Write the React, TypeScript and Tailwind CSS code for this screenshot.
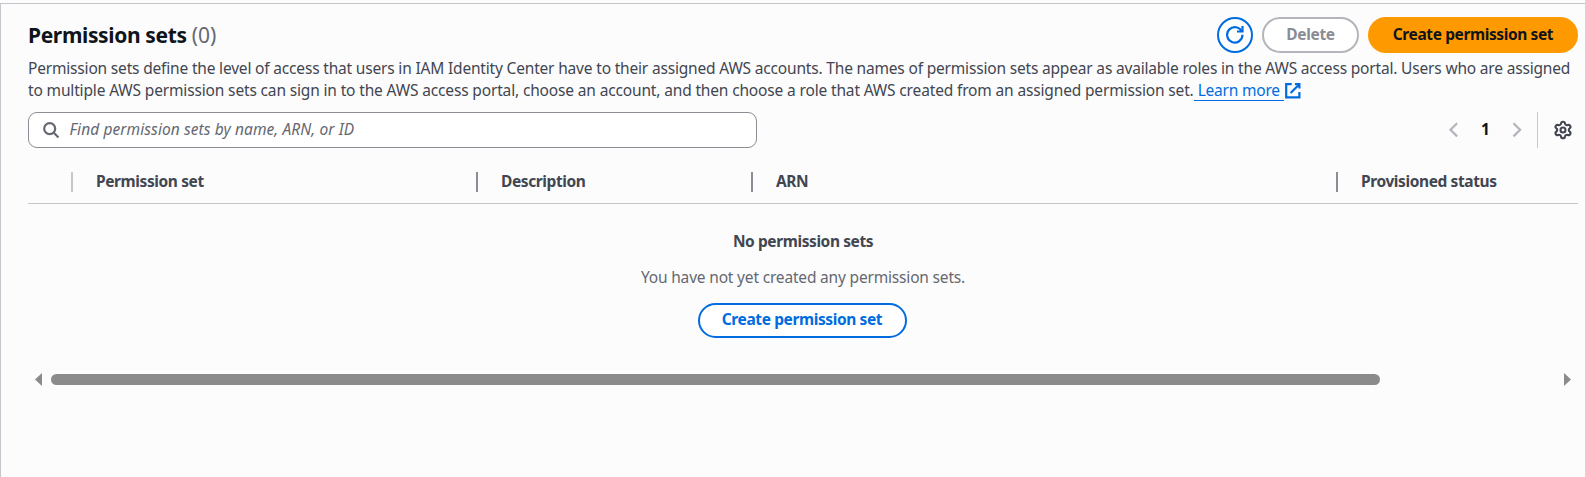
import type { ReactNode } from "react";
import { Settings } from "lucide-react";

function Icon({ children, className = "" }: { children: ReactNode; className?: string }) {
  return (
    <svg viewBox="0 0 16 16" fill="none" stroke="currentColor" strokeWidth="2" className={`size-[17.6px] shrink-0 ${className}`}>
      {children}
    </svg>
  );
}

const columns = [
  { label: "Permission set", width: "w-[405px]", bar: "bg-[#c6c6cd]" },
  { label: "Description", width: "w-[275px]", bar: "bg-[#8c8c94]" },
  { label: "ARN", width: "w-[585px]", bar: "bg-[#8c8c94]" },
  { label: "Provisioned status", width: "flex-1", bar: "bg-[#8c8c94]" },
];

function Header() {
  return (
    <header>
      <div className="flex h-9 items-center justify-between">
        <h2 className="flex gap-[5px] text-[21px] leading-7">
          <span className="font-bold tracking-[-0.36px] text-[#0f141a]">Permission sets</span>
          <span className="text-[#656871]">(0)</span>
        </h2>
        <div className="flex gap-[9px]">
          <button aria-label="Refresh" className="flex size-9 items-center justify-center rounded-full border-2 border-[#006ce0] bg-white text-[#006ce0]">
            <Icon>
              <path d="M10 5h5V0" />
              <path d="M15 8a7 7 0 1 1-.53-2.64" />
            </Icon>
          </button>
          <button className="h-9 w-[97px] rounded-full border-2 border-[#b4b4bb] bg-white pb-[2px] font-bold tracking-[-0.3px] text-[#8c8c94]">Delete</button>
          <button className="h-9 w-[210px] rounded-full bg-[#ff9900] pb-[2px] font-bold tracking-[-0.39px] text-[#0f141a]">Create permission set</button>
        </div>
      </div>
      <div className="mt-1 whitespace-nowrap text-[#424650]">
        <p className="tracking-[-0.18px]">
          Permission sets define the level of access that users in IAM Identity Center have to their assigned AWS accounts. The names of permission sets appear as available roles in the AWS access portal. Users who are assigned
        </p>
        <p className="flex h-[22px]">
          <span className="tracking-[-0.152px]">
            to multiple AWS permission sets can sign in to the AWS access portal, choose an account, and then choose a role that AWS created from an assigned permission set.
          </span>
          <a href="#" className="flex text-[#006ce0]">
            <span className="h-[22px] w-[90px] border-b border-[#006ce0] pl-1 tracking-[-0.2px]">Learn more</span>
            <Icon className="mt-[3px]">
              <path d="M10 2h4v4" />
              <path d="m6 10 8-8" />
              <path d="M14 9.05V14H2V2h5" />
            </Icon>
          </a>
        </p>
      </div>
    </header>
  );
}

function Toolbar() {
  return (
    <div className="mt-[11px] flex h-9 justify-between">
      <div className="flex w-[729px] items-center rounded-[9px] border border-[#8c8c94] bg-white pl-[13px] text-[#656871]">
        <Icon>
          <circle cx="7" cy="7" r="5" />
          <path d="m10.5 10.5 4.5 4.5" />
        </Icon>
        <span className="pb-[2px] pl-[10px] italic tracking-[0.09px]">Find permission sets by name, ARN, or ID</span>
      </div>
      <div className="flex items-center">
        <Icon className="text-[#b4b4bb]">
          <path d="M11 2 5 8l6 6" />
        </Icon>
        <span className="w-[46px] pb-[2px] text-center font-bold text-[#0f141a]">1</span>
        <Icon className="text-[#b4b4bb]">
          <path d="m5 2 6 6-6 6" />
        </Icon>
        <div className="ml-[11px] h-9 w-px bg-[#c6c6cd]" />
        <Settings size={20} strokeWidth={2.5} className="ml-[15px] mr-[5px] text-[#424650]" />
      </div>
    </div>
  );
}

function Table() {
  return (
    <div>
      <div className="flex h-14 border-b border-[#c6c6cd] pl-[43px] pt-6">
        {columns.map((c) => (
          <div key={c.label} className={`flex ${c.width}`}>
            <div className={`h-5 w-[2px] ${c.bar}`} />
            <span className="-mt-[2px] ml-[23px] font-bold tracking-[-0.4px] text-[#424650]">{c.label}</span>
          </div>
        ))}
      </div>
      <div className="flex flex-col items-center pt-[26px]">
        <p className="font-bold tracking-[-0.41px] text-[#424650]">No permission sets</p>
        <p className="mt-[14px] tracking-[-0.18px] text-[#656871]">You have not yet created any permission sets.</p>
        <button className="mr-[2px] mt-[15px] h-[35px] w-[209px] rounded-full border-2 border-[#006ce0] bg-white pb-[3px] font-bold tracking-[-0.39px] text-[#006ce0]">
          Create permission set
        </button>
      </div>
      <div className="mt-[35px] flex h-[13px] items-center pl-[7px] pr-[7px] text-[#8b8b8b]">
        <svg viewBox="0 0 7 13" className="h-[13px] w-[7px]" fill="currentColor">
          <path d="M7 0v13L0 6.5z" />
        </svg>
        <div className="ml-[9px] h-[11px] w-[1329px] rounded-full bg-[#8b8b8b]" />
        <svg viewBox="0 0 7 13" className="ml-auto h-[13px] w-[7px]" fill="currentColor">
          <path d="M0 0v13l7-6.5z" />
        </svg>
      </div>
    </div>
  );
}

export default function App() {
  return (
    <div className="h-screen overflow-hidden bg-[#fcfcfd] pt-[3px] font-['Noto_Sans',sans-serif] text-[15.5px] leading-[22px]">
      <section className="h-full border-l border-t border-[#c6c6cd] pl-[27px] pr-[7px] pt-[13px]">
        <Header />
        <Toolbar />
        <Table />
      </section>
    </div>
  );
}
